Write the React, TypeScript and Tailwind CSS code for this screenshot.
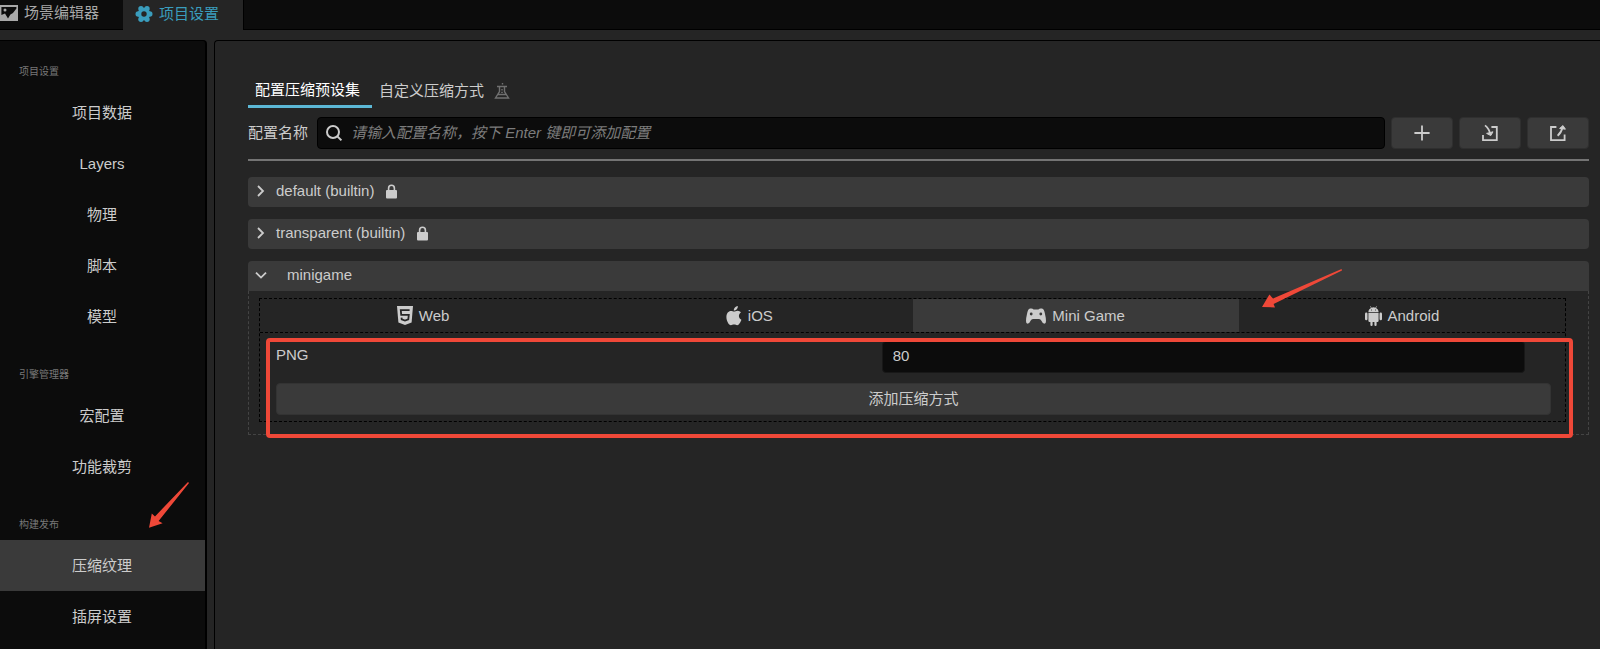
import type { ReactNode } from "react";

const sections = [
  { title: "项目设置", items: ["项目数据", "Layers", "物理", "脚本", "模型"] },
  { title: "引擎管理器", items: ["宏配置", "功能裁剪"] },
  { title: "构建发布", items: ["压缩纹理", "插屏设置"] },
];

const activeItem = "压缩纹理";
const activePlatform = "Mini Game";

function SceneIcon() {
  return (
    <svg width="18" height="16" viewBox="0 0 18 16" fill="currentColor" aria-hidden="true">
      <path fillRule="evenodd" d="M0 0H18V16H0ZM1.4 2V10L5 8.6 8 13.6 10.4 9.4 13 8 16.4 3.4V2Z" />
      <circle cx="5" cy="5" r="1.5" />
    </svg>
  );
}

function GearIcon() {
  return (
    <svg width="18" height="18" viewBox="0 0 18 18" fill="currentColor" aria-hidden="true">
      <circle cx="9" cy="9" r="6.2" />
      <circle cx="3.2" cy="9" r="2.7" />
      <circle cx="14.8" cy="9" r="2.7" />
      <circle cx="6" cy="3.8" r="2.7" />
      <circle cx="12" cy="3.8" r="2.7" />
      <circle cx="6" cy="14.2" r="2.7" />
      <circle cx="12" cy="14.2" r="2.7" />
      <circle cx="9" cy="9" r="2.7" fill="#252525" />
    </svg>
  );
}

function FlaskIcon() {
  return (
    <svg width="16" height="18" viewBox="0 0 16 18" fill="none" stroke="currentColor" strokeWidth="1.4" aria-hidden="true">
      <path d="M3 4.5H13M5.5 4.5V9.5L1.5 16H14.5L10.5 9.5V4.5M4 12.5H12M8 7V8.4M7.2 10.4H8.8M8.5 1V2.4" />
    </svg>
  );
}

function SearchIcon() {
  return (
    <svg width="18" height="18" viewBox="0 0 18 18" fill="none" stroke="currentColor" strokeWidth="2" aria-hidden="true">
      <circle cx="8" cy="8" r="6" />
      <path d="M12.4 12.4 16.4 16.4" />
    </svg>
  );
}

function PlusIcon() {
  return (
    <svg width="16" height="16" viewBox="0 0 16 16" fill="none" stroke="currentColor" strokeWidth="1.8" aria-hidden="true">
      <path d="M8 0.4V15.6M0.4 8H15.6" />
    </svg>
  );
}

function ImportIcon() {
  return (
    <svg width="18" height="18" viewBox="0 0 18 18" fill="none" stroke="currentColor" strokeWidth="1.8" aria-hidden="true">
      <path d="M2 11V16.2H15.8V3H10.4" />
      <path d="M4 1.4Q8 4.4 9.2 10" />
      <path d="M5.6 9.4 12 7.8 9.8 11.6Z" fill="currentColor" strokeWidth="1" />
    </svg>
  );
}

function ExportIcon() {
  return (
    <svg width="18" height="18" viewBox="0 0 18 18" fill="none" stroke="currentColor" strokeWidth="1.8" aria-hidden="true">
      <path d="M7.4 3H2V16.2H15.6V10.6" />
      <path d="M8.6 11.8Q12.4 8.6 13.6 3" />
      <path d="M10.6 4.4 14 1.6 16.4 5.2Z" fill="currentColor" strokeWidth="1" />
    </svg>
  );
}

function LockIcon() {
  return (
    <svg width="11" height="15" viewBox="0 0 11 15" aria-hidden="true">
      <path d="M2.6 7V4.2A2.9 2.9 0 0 1 8.4 4.2V7" fill="none" stroke="currentColor" strokeWidth="1.6" />
      <rect y="6" width="11" height="8.4" rx="1" fill="currentColor" />
    </svg>
  );
}

function Chevron({ open = false }: { open?: boolean }) {
  return (
    <svg width="12" height="12" viewBox="0 0 12 12" fill="none" stroke="currentColor" strokeWidth="1.8" aria-hidden="true">
      <path d={open ? "M1 3.6 6 8.6 11 3.6" : "M3 1 8 6 3 11"} />
    </svg>
  );
}

function HtmlIcon() {
  return (
    <svg width="16" height="19" viewBox="0 0 16 19" aria-hidden="true">
      <path d="M0 0H16L14.6 16.6 8 19 1.4 16.6Z" fill="currentColor" />
      <path d="M12.6 4.2H3.8L4.2 8.8H11.8L11.3 13.4 8 14.5 4.7 13.4 4.5 11.6" fill="none" stroke="#252525" strokeWidth="1.8" />
    </svg>
  );
}

function AppleIcon() {
  return (
    <svg width="16" height="20" viewBox="0 0 16 20" fill="currentColor" aria-hidden="true">
      <path d="M8 5.6C9 5.6 10 4.8 11.6 4.8C13 4.8 14.2 5.5 14.9 6.6C12 8.4 12.4 12.6 15.4 13.8C14.6 16.2 13 19.2 11.2 19.2C10 19.2 9.6 18.5 8.1 18.5C6.6 18.5 6 19.2 4.9 19.2C2.8 19.2 0.4 15 0.4 11C0.4 7 2.6 4.9 4.9 4.9C6.3 4.9 7.2 5.6 8 5.6Z" />
      <path d="M7.8 4.6C7.6 2.4 9.6 0.3 11.8 0.1C12.1 2.5 10 4.7 7.8 4.6Z" />
    </svg>
  );
}

function GamepadIcon() {
  return (
    <svg width="20" height="16" viewBox="0 0 20 16" fill="currentColor" aria-hidden="true">
      <path
        fillRule="evenodd"
        d="M4 0.6Q6.4 0 7.6 1.6H12.4Q13.6 0 16 0.6Q18 1 18.8 5Q20 10 20 13Q20 16 18 15.6Q16.6 15.4 15.4 12.8Q14.6 11 13 11H7Q5.4 11 4.6 12.8Q3.4 15.4 2 15.6Q0 16 0 13Q0 10 1.2 5Q2 1 4 0.6ZM5.2 4.6A1.4 1.4 0 1 0 5.2 7.4A1.4 1.4 0 1 0 5.2 4.6ZM14.8 4.6A1.4 1.4 0 1 0 14.8 7.4A1.4 1.4 0 1 0 14.8 4.6Z"
      />
    </svg>
  );
}

function AndroidIcon() {
  return (
    <svg width="17" height="20" viewBox="0 0 17 20" fill="currentColor" aria-hidden="true">
      <path fillRule="evenodd" d="M3.4 6C3.4 4 4.6 2.6 6 1.9L5.2 0.4 5.6 0.1 6.5 1.7Q8.5 1 10.5 1.7L11.4 0.1 11.8 0.4 11 1.9C12.4 2.6 13.6 4 13.6 6ZM6.2 3.4V4.4H7V3.4ZM10 3.4V4.4H10.8V3.4Z" />
      <path d="M3.4 6.8H13.6V14.8Q13.6 16 12.4 16H11.6V19Q11.6 20 10.6 20Q9.4 20 9.4 19V16H7.6V19Q7.6 20 6.5 20Q5.4 20 5.4 19V16H4.6Q3.4 16 3.4 14.8Z" />
      <rect y="6.6" width="2.5" height="7.6" rx="1.2" />
      <rect x="14.5" y="6.6" width="2.5" height="7.6" rx="1.2" />
    </svg>
  );
}

const platforms: { name: string; icon: ReactNode }[] = [
  { name: "Web", icon: <HtmlIcon /> },
  { name: "iOS", icon: <AppleIcon /> },
  { name: "Mini Game", icon: <GamepadIcon /> },
  { name: "Android", icon: <AndroidIcon /> },
];

function EditorTabs() {
  return (
    <nav className="flex h-[30px] bg-[#0c0c0c]">
      <button className="flex items-center gap-[6px] border-b border-black pr-6 pb-[3px] text-[#a8a8a8]">
        <SceneIcon />
        场景编辑器
      </button>
      <button className="flex items-center gap-[6px] bg-[#252525] pr-6 pb-[3px] pl-3 text-[#3a9dbd]">
        <GearIcon />
        项目设置
      </button>
      <div className="flex-1 border-b border-l border-black" />
    </nav>
  );
}

function Sidebar() {
  return (
    <aside className="w-[207px] shrink-0 overflow-hidden rounded-tr border-t border-r-2 border-black bg-[#0c0c0c]">
      {sections.map((section) => (
        <section key={section.title} className="pb-[2px]">
          <h2 className="h-[46px] pt-[21px] pl-[19px] text-[10px] leading-5 text-[#787878]">{section.title}</h2>
          {section.items.map((item) => (
            <button
              key={item}
              className={`block h-[51px] w-full pr-px text-center ${item === activeItem ? "bg-[#3a3a3a]" : ""}`}
            >
              {item}
            </button>
          ))}
        </section>
      ))}
    </aside>
  );
}

function Toolbar() {
  const button = "flex h-8 w-[62px] shrink-0 items-center justify-center rounded-sm border border-[#2f2f2f] bg-[#3a3a3a]";
  return (
    <div className="mt-[9px] flex items-center gap-[6px]">
      <label htmlFor="preset-name" className="w-[63px] shrink-0">配置名称</label>
      <div className="flex h-8 min-w-0 flex-1 items-center gap-2 rounded-sm border border-black bg-[#0c0c0c] pl-[7px]">
        <SearchIcon />
        <input
          id="preset-name"
          placeholder="请输入配置名称，按下 Enter 键即可添加配置"
          className="min-w-0 flex-1 bg-transparent outline-none placeholder:text-[#7c7c7c] placeholder:italic"
        />
      </div>
      <button aria-label="添加" className={button}><PlusIcon /></button>
      <button aria-label="导入" className={button}><ImportIcon /></button>
      <button aria-label="导出" className={button}><ExportIcon /></button>
    </div>
  );
}

function LockedPreset({ name }: { name: string }) {
  return (
    <button className="mb-3 flex h-[30px] w-full items-center rounded-sm bg-[#3a3a3a] pb-[2px] pl-[7px]">
      <Chevron />
      <span className="mr-3 ml-[9px]">{name}</span>
      <LockIcon />
    </button>
  );
}

function MinigamePreset() {
  return (
    <section className="relative">
      <button className="flex h-[30px] w-full items-center gap-5 rounded-t-sm bg-[#3a3a3a] pb-[2px] pl-[7px]">
        <Chevron open />
        minigame
      </button>
      <div className="border border-t-0 border-dashed border-[#444] pt-[7px] pr-[22px] pb-3 pl-[10px]">
        <div className="border border-dashed border-black">
          <div className="grid grid-cols-4 border-b border-dashed border-black">
            {platforms.map(({ name, icon }) => (
              <button
                key={name}
                className={`flex h-[33px] items-center justify-center gap-[6px] ${name === activePlatform ? "bg-[#3a3a3a]" : ""}`}
              >
                {icon}
                {name}
              </button>
            ))}
          </div>
          <div className="pt-2 pr-[14px] pb-[6px] pl-4">
            <div className="flex h-8 items-center pr-[26px]">
              <label htmlFor="png-quality" className="flex-1 pb-1">PNG</label>
              <input
                id="png-quality"
                defaultValue="80"
                className="h-full w-[51.5%] rounded-sm border border-[#181818] bg-[#0c0c0c] px-[10px] pb-1 outline-none"
              />
            </div>
            <button className="mt-[10px] block h-8 w-full rounded-sm border border-[#333] bg-[#3a3a3a]">添加压缩方式</button>
          </div>
        </div>
      </div>

      <div className="pointer-events-none absolute top-[77px] right-4 -bottom-[3px] left-[18px] rounded border-4 border-[#ef4838]" />
      <svg className="pointer-events-none absolute top-2 right-[247px]" width="80" height="40" viewBox="0 0 80 40" aria-hidden="true">
        <path d="M79.6 0 11 29.4 7.4 25.6 0 38 13 38.4 11.6 35 80 1.4Z" fill="#ef4838" />
      </svg>
    </section>
  );
}

export default function App() {
  return (
    <div className="flex h-screen flex-col overflow-hidden bg-[#252525] font-['Liberation_Sans','Noto_Sans_CJK_SC',sans-serif] text-[15px] leading-6 text-[#cccccc]">
      <EditorTabs />
      <div className="flex min-h-0 flex-1 gap-[7px] pt-[10px]">
        <div className="relative flex">
          <Sidebar />
          <svg className="pointer-events-none absolute top-[441px] left-[148px]" width="42" height="48" viewBox="0 0 42 48" aria-hidden="true">
            <path d="M40 1 7 35.4 3.8 32.4 1 46.8 14.6 42.2 10.6 40 41 2Z" fill="#ef4838" />
          </svg>
        </div>
        <main className="min-w-0 flex-1 rounded-tl border-t border-l border-black pt-9 pr-[11px] pl-[33px]">
          <div className="flex items-start">
            <button className="h-[31px] border-b-3 border-[#5cb8d6] pt-px pr-3 pb-[3px] pl-[7px] text-white">配置压缩预设集</button>
            <button className="flex items-center gap-[10px] px-[7px] pt-[2px]">
              自定义压缩方式
              <span className="text-[#707070]"><FlaskIcon /></span>
            </button>
          </div>
          <Toolbar />
          <hr className="mt-[10px] mb-4 border-t-2 border-[#747474]" />
          <LockedPreset name="default (builtin)" />
          <LockedPreset name="transparent (builtin)" />
          <MinigamePreset />
        </main>
      </div>
    </div>
  );
}
